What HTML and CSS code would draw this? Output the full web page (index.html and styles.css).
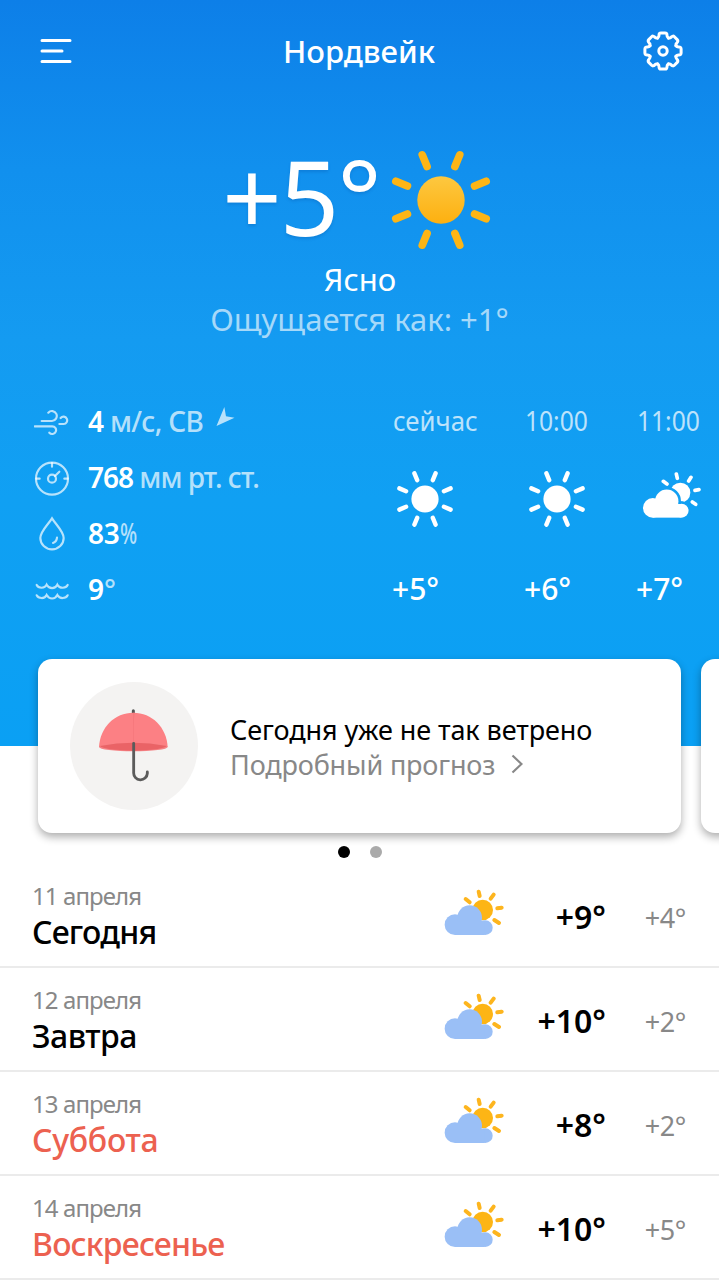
FILE: index.html
```html
<!DOCTYPE html>
<html lang="ru">
<head>
<meta charset="utf-8">
<title>Погода</title>
<link rel="stylesheet" href="styles.css">
</head>
<body>
<svg class="defs" aria-hidden="true">
  <defs>
    <linearGradient id="sun-fill" x1="0" y1="0" x2="0" y2="1"><stop offset="0" stop-color="#fdc840"/><stop offset="1" stop-color="#fdb010"/></linearGradient>
    <path id="tooth" d="M12.9-5.4Q14-3.9 15.6-4Q18.1-4.1 18.1-2V2Q18.1 4.1 15.6 4Q14 3.9 12.9 5.4"/>
    <symbol id="sun" viewBox="0 0 60 60">
      <circle cx="30" cy="30" r="13.6" fill="currentColor"/>
      <g stroke="currentColor" stroke-width="4.4" stroke-linecap="round">
        <path d="M37.8 11.1l2.8-6.7M48.9 22.2l6.7-2.8M48.9 37.8l6.7 2.8M37.8 48.9l2.8 6.7M22.2 48.9l-2.8 6.7M11.1 37.8l-6.7 2.8M11.1 22.2l-6.7-2.8M22.2 11.1l-2.8-6.7"/>
      </g>
    </symbol>
    <g id="cloud"><circle cx="33" cy="110" r="31"/><circle cx="77" cy="89" r="37"/><circle cx="124" cy="119" r="22"/><path d="M33 98H122V141H33Z"/></g>
    <symbol id="cloudy" viewBox="0 0 180 144">
      <circle cx="116" cy="66" r="31" fill="#fdb515"/>
      <path d="M65 33l12 10M104 11l3 13M149 20l-9 12M173 59l-13 2M151 96l14 9" stroke="#fdb51e" stroke-width="12" stroke-linecap="round"/>
      <use href="#cloud" fill="#9abff6"/>
    </symbol>
  </defs>
</svg>

<main class="app">
  <section class="hero">
    <header class="topbar">
      <svg class="menu" viewBox="0 0 32 26"><path d="M2 2.5H30M2 13H22M2 23.5H30"/></svg>
      <h1 class="city">Нордвейк</h1>
      <svg class="gear" viewBox="-20 -20 40 40">
        <use href="#tooth"/><use href="#tooth" transform="rotate(45)"/><use href="#tooth" transform="rotate(90)"/><use href="#tooth" transform="rotate(135)"/>
        <use href="#tooth" transform="rotate(180)"/><use href="#tooth" transform="rotate(225)"/><use href="#tooth" transform="rotate(270)"/><use href="#tooth" transform="rotate(315)"/>
        <circle r="4.2"/>
      </svg>
    </header>

    <div class="now">
      <div class="now-row">
        <span class="now-temp">+5°</span>
        <svg class="now-icon" viewBox="0 0 100 100">
          <circle cx="50" cy="50" r="22.8" fill="url(#sun-fill)"/>
          <path d="M63.4 17.7l4.6-11.1M82.3 36.6l11.1-4.6M82.3 63.4l11.1 4.6M63.4 82.3l4.6 11.1M36.6 82.3l-4.6 11.1M17.7 63.4l-11.1 4.6M17.7 36.6l-11.1-4.6M36.6 17.7l-4.6-11.1" stroke="#fdb515" stroke-width="7.4" stroke-linecap="round"/>
        </svg>
      </div>
      <div class="condition">Ясно</div>
      <div class="feels">Ощущается как: +1°</div>
    </div>

    <div class="details">
      <ul class="stats">
        <li class="stat">
          <svg class="stat-icon" viewBox="0 0 108 108"><path d="M23 51H54A14.5 15 0 1 0 43 26M2 67H54a11.500 11.500 0 1 1-8 19M76 60H89a11 11 0 1 0-9-18"/></svg>
          <span class="stat-text wind"><b>4</b> м/с, СВ</span>
          <svg class="arrow" viewBox="0 0 55 58"><path d="M0 58L24 0L29 28L55 33Z"/></svg>
        </li>
        <li class="stat">
          <svg class="stat-icon" viewBox="0 0 108 108"><circle cx="54" cy="56" r="48"/><circle cx="54" cy="56" r="12"/><path d="M63 48L76 35M54 9V20M7 56H17M91 56H101"/></svg>
          <span class="stat-text pressure"><b>768</b> мм рт. ст.</span>
        </li>
        <li class="stat">
          <svg class="stat-icon" viewBox="0 0 108 108"><path d="M54 7C43 25 19 46 19 66a35 34 0 0 0 70 0C89 46 65 25 54 7ZM69 65Q68 77 57 81"/></svg>
          <span class="stat-text humidity"><b>83</b><span class="percent">%</span></span>
        </li>
        <li class="stat">
          <svg class="stat-icon" viewBox="0 0 108 108"><path d="M8 39c5 10 24 12 30-1c8 14 25 14 32 0c7 13 26 11 31 1M8 70c5 10 24 12 30-1c8 14 25 14 32 0c7 13 26 11 31 1"/></svg>
          <span class="stat-text water"><b>9</b>°</span>
        </li>
      </ul>
      <div class="hours">
        <div class="hour"><span class="hour-label label-now">сейчас</span><svg class="hour-icon"><use href="#sun"/></svg><span class="hour-temp">+5°</span></div>
        <div class="hour"><span class="hour-label">10:00</span><svg class="hour-icon"><use href="#sun"/></svg><span class="hour-temp">+6°</span></div>
        <div class="hour"><span class="hour-label">11:00</span>
          <svg class="hour-icon hour-cloud" viewBox="0 0 180 180">
            <circle cx="118" cy="71" r="30" fill="#fff"/>
            <path d="M67 37l11 8M106 15l3 13M150 25l-7 11M174 62l-12 2M154 99l10 7" stroke="#fff" stroke-width="11" stroke-linecap="round"/>
            <g transform="translate(4 12) scale(.95)"><use href="#cloud" fill="#11a0f3" stroke="#11a0f3" stroke-width="16"/><use href="#cloud" fill="#fff"/></g>
          </svg>
          <span class="hour-temp">+7°</span></div>
      </div>
    </div>
  </section>

  <section class="cards">
    <article class="card">
      <svg class="umbrella" viewBox="0 0 384 384">
        <circle cx="192" cy="192" r="192" fill="#f4f3f2"/>
        <path d="M190 86V100" stroke="#555" stroke-width="9" stroke-linecap="round"/>
        <path d="M87 195C90 136 134 92 190 92s100 44 103 103z" fill="#fc8084"/>
        <path d="M190 92h4q-3 10-3 90h-2z" fill="#f4757a"/>
        <ellipse cx="190" cy="195" rx="103" ry="13" fill="#f58386"/>
        <path d="M90 192q100-20 200 0q-12 12-100 14q-88-2-100-14z" fill="#ea6366"/>
        <path d="M191 184V272a20.500 20.500 0 0 0 41 2V270" fill="none" stroke="#5b5b5b" stroke-width="8.500" stroke-linecap="round"/>
      </svg>
      <div class="card-text">
        <div class="card-title">Сегодня уже не так ветрено</div>
        <div class="card-link"><span>Подробный прогноз</span><svg class="chevron" viewBox="0 0 12 20"><path d="M1.500 1.500L10.500 10L1.500 18.500"/></svg></div>
      </div>
    </article>
    <article class="card"></article>
  </section>
  <div class="dots"><i class="dot active"></i><i class="dot"></i></div>

  <section class="days">
    <div class="day"><div class="day-name"><span class="date">11 апреля</span><span class="name today">Сегодня</span></div><svg class="day-icon"><use href="#cloudy"/></svg><span class="high">+9°</span><span class="low">+4°</span></div>
    <div class="day"><div class="day-name"><span class="date">12 апреля</span><span class="name tomorrow">Завтра</span></div><svg class="day-icon"><use href="#cloudy"/></svg><span class="high">+10°</span><span class="low">+2°</span></div>
    <div class="day weekend"><div class="day-name"><span class="date">13 апреля</span><span class="name saturday">Суббота</span></div><svg class="day-icon"><use href="#cloudy"/></svg><span class="high">+8°</span><span class="low">+2°</span></div>
    <div class="day weekend"><div class="day-name"><span class="date">14 апреля</span><span class="name sunday">Воскресенье</span></div><svg class="day-icon"><use href="#cloudy"/></svg><span class="high">+10°</span><span class="low">+5°</span></div>
  </section>
</main>
</body>
</html>
```

FILE: styles.css
```css
* { box-sizing: border-box; }
body { margin: 0; background: #fff; font-family: "Noto Sans", sans-serif; color: #000; }
.defs { position: absolute; width: 0; height: 0; }
.app { width: 719px; height: 1280px; overflow: hidden; }

.hero { height: 746px; color: #fff; background: linear-gradient(#0d7fe8 0, #1190ee 170px, #149bf1 340px, #10a0f3 500px, #0aa0f4 746px); }
.topbar { display: flex; align-items: center; justify-content: space-between; height: 102px; padding: 0 36px 0 40px; }
.menu { width: 32px; height: 26px; fill: none; stroke: #fff; stroke-width: 3; stroke-linecap: round; }
.city { margin: 0; padding-left: 3px; font-size: 31px; font-weight: 500; line-height: 40px; }
.gear { width: 40px; height: 40px; fill: none; stroke: #fff; stroke-width: 3; stroke-linecap: round; }

.now { display: flex; flex-direction: column; align-items: center; padding-top: 34px; text-align: center; }
.now-row { display: flex; align-items: flex-start; height: 123px; padding-right: 4px; }
.now-temp { font-size: 104px; line-height: 119px; letter-spacing: -2px; text-shadow: 0 2px 3px rgba(0, 60, 140, .2); }
.now-icon { width: 104px; height: 104px; margin: 12px 0 0 9px; fill: none; }
.condition { padding-left: 1px; font-size: 31px; font-weight: 450; line-height: 40px; }
.feels { font-size: 31px; line-height: 40px; color: rgba(255, 255, 255, .63); }

.details { display: flex; margin-top: 55px; }
.stats { flex: none; width: 392px; margin: 0; padding: 0 0 0 34px; list-style: none; }
.stat { display: flex; align-items: center; height: 56px; }
.stat-icon { width: 36px; height: 36px; margin-right: 18px; fill: none; stroke: rgba(255, 255, 255, .7); stroke-width: 6.5; stroke-linecap: round; }
.stat-text { padding-bottom: 3px; font-size: 28px; font-weight: 500; line-height: 36px; color: rgba(255, 255, 255, .7); white-space: pre; }
.stat-text b { font-weight: 600; color: #fff; }
.wind { letter-spacing: -.7px; }
.pressure { letter-spacing: -1px; }
.humidity { letter-spacing: -.2px; }
.percent { display: inline-block; transform: scaleX(.72); transform-origin: 0 50%; }
.arrow { width: 19px; height: 19px; margin: 0 0 11px 13px; fill: rgba(255, 255, 255, .7); }
.hours { display: flex; }
.hour { display: flex; flex-direction: column; width: 112px; }
.hour:first-child { width: 132px; }
.hour-label { padding-left: 1px; font-size: 28px; line-height: 53px; color: rgba(255, 255, 255, .73); white-space: nowrap; transform: scaleX(.88); transform-origin: 0 50%; }
.label-now { transform: scaleX(.92); }
.hour-icon { width: 60px; height: 60px; margin: 22px 0 40px 3px; color: #fff; }
.hour-cloud { margin-left: 5px; }
.hour-temp { font-size: 30px; font-weight: 550; line-height: 40px; }

.cards { display: flex; gap: 20px; margin-top: -87px; padding-left: 38px; }
.card { display: flex; flex: none; align-items: center; width: 643px; height: 174px; padding-left: 32px; border-radius: 14px; background: #fff; box-shadow: 0 4px 9px rgba(0, 0, 0, .32); }
.umbrella { width: 128px; height: 128px; margin-right: 32px; }
.card-text { padding-top: 1px; }
.card-title { font-size: 27px; font-weight: 450; line-height: 35px; letter-spacing: -.08px; white-space: nowrap; }
.card-link { display: flex; align-items: center; gap: 16px; font-size: 27px; line-height: 35px; letter-spacing: -.15px; color: #888; white-space: nowrap; }
.chevron { width: 12px; height: 20px; fill: none; stroke: #888; stroke-width: 2.2; }
.dots { display: flex; gap: 20px; justify-content: center; height: 31px; padding-top: 13px; }
.dot { width: 12px; height: 12px; border-radius: 50%; background: #aaa; }
.dot.active { background: #000; }

.day { display: flex; height: 104px; padding-right: 33px; border-bottom: 2px solid #ebebeb; }
.day-name { display: flex; flex: none; flex-direction: column; width: 444px; padding: 16px 0 0 32px; }
.date { font-size: 24px; line-height: 32px; letter-spacing: -.9px; color: #888; }
.name { font-size: 32px; line-height: 40px; font-weight: 480; letter-spacing: -.8px; }
.tomorrow { letter-spacing: -.5px; }
.saturday { letter-spacing: -.3px; }
.weekend .name { color: #ec6150; }
.day-icon { width: 60px; height: 48px; margin-top: 24px; }
.high, .low { line-height: 40px; white-space: nowrap; text-align: right; }
.high { width: 102px; margin-top: 33px; font-size: 32px; font-weight: 600; }
.low { flex: 1; margin-top: 34px; font-size: 27px; letter-spacing: -.4px; color: #888; }
```
